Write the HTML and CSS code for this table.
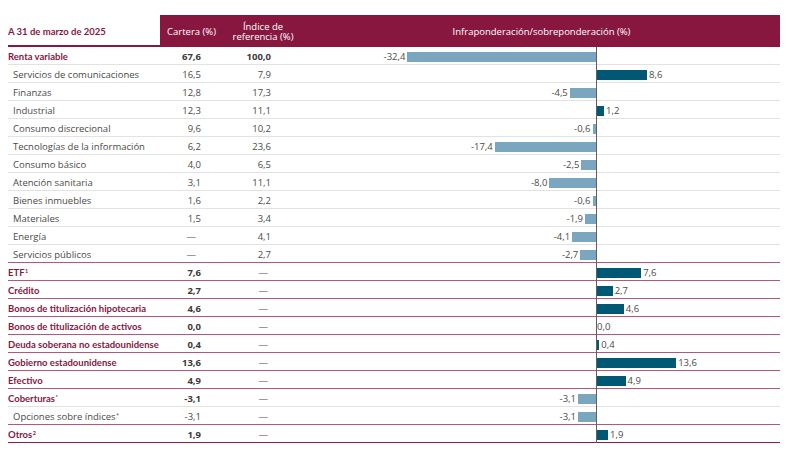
FILE: index.html
```html
<!DOCTYPE html>
<html lang="es">
<head>
<meta charset="utf-8">
<link rel="stylesheet" href="styles.css">
</head>
<body>
<div class="table">
  <div class="head">
    <div class="h-label">A 31 de marzo de 2025</div>
    <div class="h-col h-cart">Cartera (%)</div>
    <div class="h-col h-idx"><span class="hl">Índice de</span><span class="hl">referencia (%)</span></div>
    <div class="h-col h-chart">Infraponderación/sobreponderación (%)</div>
  </div>

  <div class="row main gray"><div class="lab">Renta variable</div><div class="c1 b">67,6</div><div class="c2 b">100,0</div><div class="chart"><div class="neg"><span class="val">-32,4</span><span class="bar light" style="width:188.6px"></span></div><div class="pos"></div></div></div>
  <div class="row gray"><div class="lab">Servicios de comunicaciones</div><div class="c1">16,5</div><div class="c2">7,9</div><div class="chart"><div class="neg"></div><div class="pos"><span class="bar dark" style="width:50px"></span><span class="val">8,6</span></div></div></div>
  <div class="row gray"><div class="lab">Finanzas</div><div class="c1">12,8</div><div class="c2">17,3</div><div class="chart"><div class="neg"><span class="val">-4,5</span><span class="bar light" style="width:26.2px"></span></div><div class="pos"></div></div></div>
  <div class="row gray"><div class="lab">Industrial</div><div class="c1">12,3</div><div class="c2">11,1</div><div class="chart"><div class="neg"></div><div class="pos"><span class="bar dark" style="width:7px"></span><span class="val">1,2</span></div></div></div>
  <div class="row gray"><div class="lab">Consumo discrecional</div><div class="c1">9,6</div><div class="c2">10,2</div><div class="chart"><div class="neg"><span class="val">-0,6</span><span class="bar light" style="width:3.5px"></span></div><div class="pos"></div></div></div>
  <div class="row gray"><div class="lab">Tecnologías de la información</div><div class="c1">6,2</div><div class="c2">23,6</div><div class="chart"><div class="neg"><span class="val">-17,4</span><span class="bar light" style="width:101.3px"></span></div><div class="pos"></div></div></div>
  <div class="row gray"><div class="lab">Consumo básico</div><div class="c1">4,0</div><div class="c2">6,5</div><div class="chart"><div class="neg"><span class="val">-2,5</span><span class="bar light" style="width:14.6px"></span></div><div class="pos"></div></div></div>
  <div class="row gray"><div class="lab">Atención sanitaria</div><div class="c1">3,1</div><div class="c2">11,1</div><div class="chart"><div class="neg"><span class="val">-8,0</span><span class="bar light" style="width:46.6px"></span></div><div class="pos"></div></div></div>
  <div class="row gray"><div class="lab">Bienes inmuebles</div><div class="c1">1,6</div><div class="c2">2,2</div><div class="chart"><div class="neg"><span class="val">-0,6</span><span class="bar light" style="width:3.5px"></span></div><div class="pos"></div></div></div>
  <div class="row gray"><div class="lab">Materiales</div><div class="c1">1,5</div><div class="c2">3,4</div><div class="chart"><div class="neg"><span class="val">-1,9</span><span class="bar light" style="width:11px"></span></div><div class="pos"></div></div></div>
  <div class="row gray"><div class="lab">Energía</div><div class="c1"><span class="dash1">—</span></div><div class="c2">4,1</div><div class="chart"><div class="neg"><span class="val">-4,1</span><span class="bar light" style="width:23.9px"></span></div><div class="pos"></div></div></div>
  <div class="row pink"><div class="lab">Servicios públicos</div><div class="c1"><span class="dash1">—</span></div><div class="c2">2,7</div><div class="chart"><div class="neg"><span class="val">-2,7</span><span class="bar light" style="width:15.7px"></span></div><div class="pos"></div></div></div>

  <div class="row main pink"><div class="lab">ETF<sup>1</sup></div><div class="c1 b">7,6</div><div class="c2"><span class="dash2">—</span></div><div class="chart"><div class="neg"></div><div class="pos"><span class="bar dark" style="width:44.2px"></span><span class="val">7,6</span></div></div></div>
  <div class="row main pink"><div class="lab">Crédito</div><div class="c1 b">2,7</div><div class="c2"><span class="dash2">—</span></div><div class="chart"><div class="neg"></div><div class="pos"><span class="bar dark" style="width:15.7px"></span><span class="val">2,7</span></div></div></div>
  <div class="row main pink"><div class="lab">Bonos de titulización hipotecaria</div><div class="c1 b">4,6</div><div class="c2"><span class="dash2">—</span></div><div class="chart"><div class="neg"></div><div class="pos"><span class="bar dark" style="width:26.8px"></span><span class="val">4,6</span></div></div></div>
  <div class="row main pink"><div class="lab">Bonos de titulización de activos</div><div class="c1 b">0,0</div><div class="c2"><span class="dash2">—</span></div><div class="chart"><div class="neg"></div><div class="pos"><span class="val zero">0,0</span></div></div></div>
  <div class="row main pink"><div class="lab">Deuda soberana no estadounidense</div><div class="c1 b">0,4</div><div class="c2"><span class="dash2">—</span></div><div class="chart"><div class="neg"></div><div class="pos"><span class="bar dark" style="width:2.3px"></span><span class="val">0,4</span></div></div></div>
  <div class="row main pink"><div class="lab">Gobierno estadounidense</div><div class="c1 b">13,6</div><div class="c2"><span class="dash2">—</span></div><div class="chart"><div class="neg"></div><div class="pos"><span class="bar dark" style="width:79.2px"></span><span class="val">13,6</span></div></div></div>
  <div class="row main pink"><div class="lab">Efectivo</div><div class="c1 b">4,9</div><div class="c2"><span class="dash2">—</span></div><div class="chart"><div class="neg"></div><div class="pos"><span class="bar dark" style="width:28.5px"></span><span class="val">4,9</span></div></div></div>
  <div class="row main gray"><div class="lab">Coberturas<sup>*</sup></div><div class="c1 b">-3,1</div><div class="c2"><span class="dash2">—</span></div><div class="chart"><div class="neg"><span class="val">-3,1</span><span class="bar light" style="width:18px"></span></div><div class="pos"></div></div></div>
  <div class="row pink"><div class="lab">Opciones sobre índices<sup>*</sup></div><div class="c1">-3,1</div><div class="c2"><span class="dash2">—</span></div><div class="chart"><div class="neg"><span class="val">-3,1</span><span class="bar light" style="width:18px"></span></div><div class="pos"></div></div></div>
  <div class="row main last"><div class="lab">Otros<sup>2</sup></div><div class="c1 b">1,9</div><div class="c2"><span class="dash2">—</span></div><div class="chart"><div class="neg"></div><div class="pos"><span class="bar dark" style="width:11px"></span><span class="val">1,9</span></div></div></div>
</div>
</body>
</html>
```

FILE: styles.css
```css
* { box-sizing: border-box; }
body {
  margin: 15px 8px 0 8px;
  background: #fff;
  font-family: "Open Sans", "Liberation Sans", sans-serif;
  font-size: 9.5px;
  color: #4a4a4a;
}
.table { width: 772px; }
.head {
  display: grid;
  grid-template-columns: 152px 63px 80px 1fr;
  height: 32px;
}
.h-label {
  display: flex;
  align-items: center;
  padding-top: 2px;
  color: #87173f;
  font-family: Lato, "Open Sans", sans-serif;
  font-weight: 700;
  font-size: 9.5px;
  border-bottom: 2px solid #87173f;
}
.h-col {
  background: #87173f;
  color: #fff;
  font-weight: 400;
  display: flex;
  align-items: center;
  justify-content: center;
  text-align: center;
  font-size: 9.5px;
}
.h-idx {
  flex-direction: column;
  line-height: 10px;
  padding-top: 1px;
}
.hl { display: block; height: 10px; }
.row {
  display: grid;
  grid-template-columns: 152px 63px 80px 1fr;
  height: 18px;
  padding-top: 1px;
  border-bottom: 1px solid #e2e2e2;
  align-items: center;
}
.row.pink { border-bottom: 1px solid #b2587a; }
.row.last { border-bottom: 1px solid #8f1f47; }
.lab { padding-left: 5px; white-space: nowrap; }
.main .lab {
  padding-left: 0;
  color: #87173f;
  font-family: Lato, "Open Sans", sans-serif;
  font-weight: 700;
  font-size: 9.5px;
}
sup { font-size: 5.5px; line-height: 0; vertical-align: 3px; margin-left: 0.5px; }
.c1 { text-align: right; padding-right: 22px; }
.c2 { text-align: right; padding-right: 32px; }
.b { font-weight: 700; color: #3a3a3a; }
.dash1 { margin-right: 5px; }
.dash2 { margin-right: 3px; }
.chart {
  display: flex;
  height: 18px;
  margin-top: -1px;
  margin-bottom: -1px;
}
.neg {
  width: 293px;
  display: flex;
  justify-content: flex-end;
  align-items: center;
  padding-top: 1px;
}
.pos {
  flex: 1;
  display: flex;
  align-items: center;
  padding-top: 1px;
  border-left: 1px solid #5f5f5f;
}
.bar { display: block; height: 10px; }
.bar.light { background: #7aa6c0; }
.bar.dark { background: #005874; }
.neg .val { margin-right: 2px; }
.pos .val { margin-left: 2px; }
.pos .val.zero { margin-left: 0; }
```
